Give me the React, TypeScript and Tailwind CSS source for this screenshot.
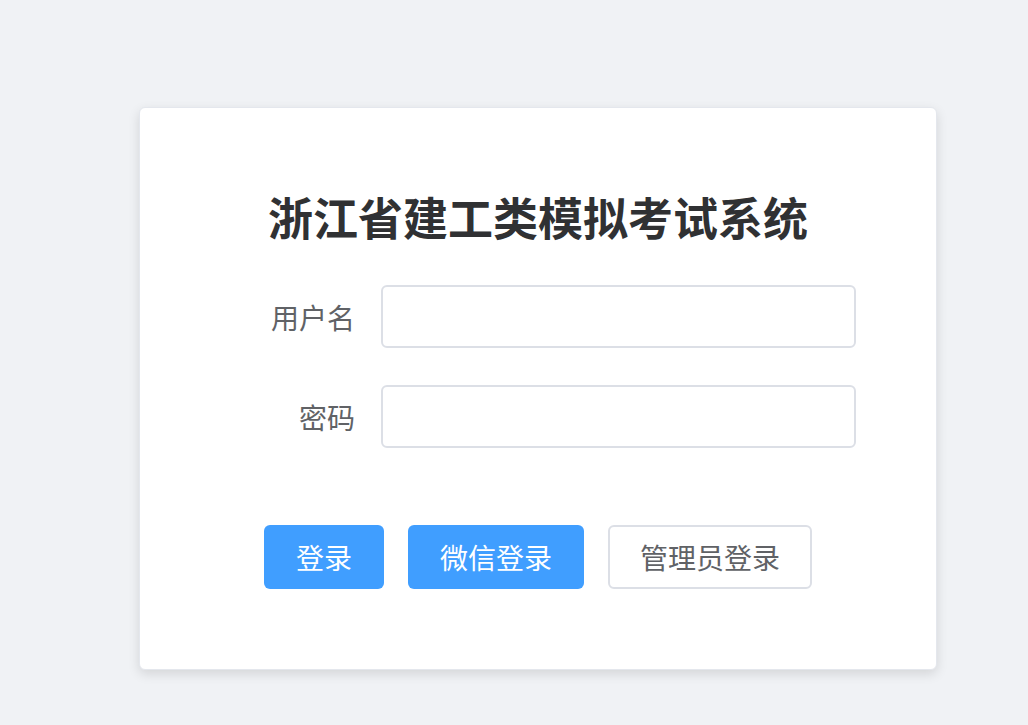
import React from "react";

const font = { fontFamily: '"Noto Sans CJK SC", "Noto Sans", sans-serif' };

function Field({ label, type }: { label: string; type: string }) {
  return (
    <div className="flex items-center h-[63px]">
      <label className="w-[117px] pr-[26px] text-right text-[28px] text-[#606266] leading-none">
        {label}
      </label>
      <input
        type={type}
        className="w-[475px] h-[63px] rounded-[6px] border-2 border-[#dcdfe6] bg-white px-4 text-[24px] outline-none"
      />
    </div>
  );
}

export default function App() {
  return (
    <div className="min-h-[725px] w-full bg-[#f0f2f5] pt-[107px] pl-[139px]" style={font}>
      <div className="w-[798px] h-[563px] rounded-[6px] border border-[#e4e7ed] bg-white shadow-[0_4px_12px_rgba(0,0,0,0.12)]">
        <h1 className="pt-[79px] text-center text-[45px] font-bold leading-[60px] text-[#303133]">
          浙江省建工类模拟考试系统
        </h1>
        <div className="pl-[124px] mt-[38px] flex flex-col gap-[37px]">
          <Field label="用户名" type="text" />
          <Field label="密码" type="password" />
        </div>
        <div className="pl-[124px] mt-[77px] flex gap-[24px]">
          <button className="h-[64px] w-[120px] rounded-[6px] bg-[#409eff] text-white text-[28px] leading-none">
            登录
          </button>
          <button className="h-[64px] w-[176px] rounded-[6px] bg-[#409eff] text-white text-[28px] leading-none">
            微信登录
          </button>
          <button className="h-[64px] w-[204px] rounded-[6px] border-2 border-[#dcdfe6] bg-white text-[#606266] text-[28px] leading-none">
            管理员登录
          </button>
        </div>
      </div>
    </div>
  );
}
